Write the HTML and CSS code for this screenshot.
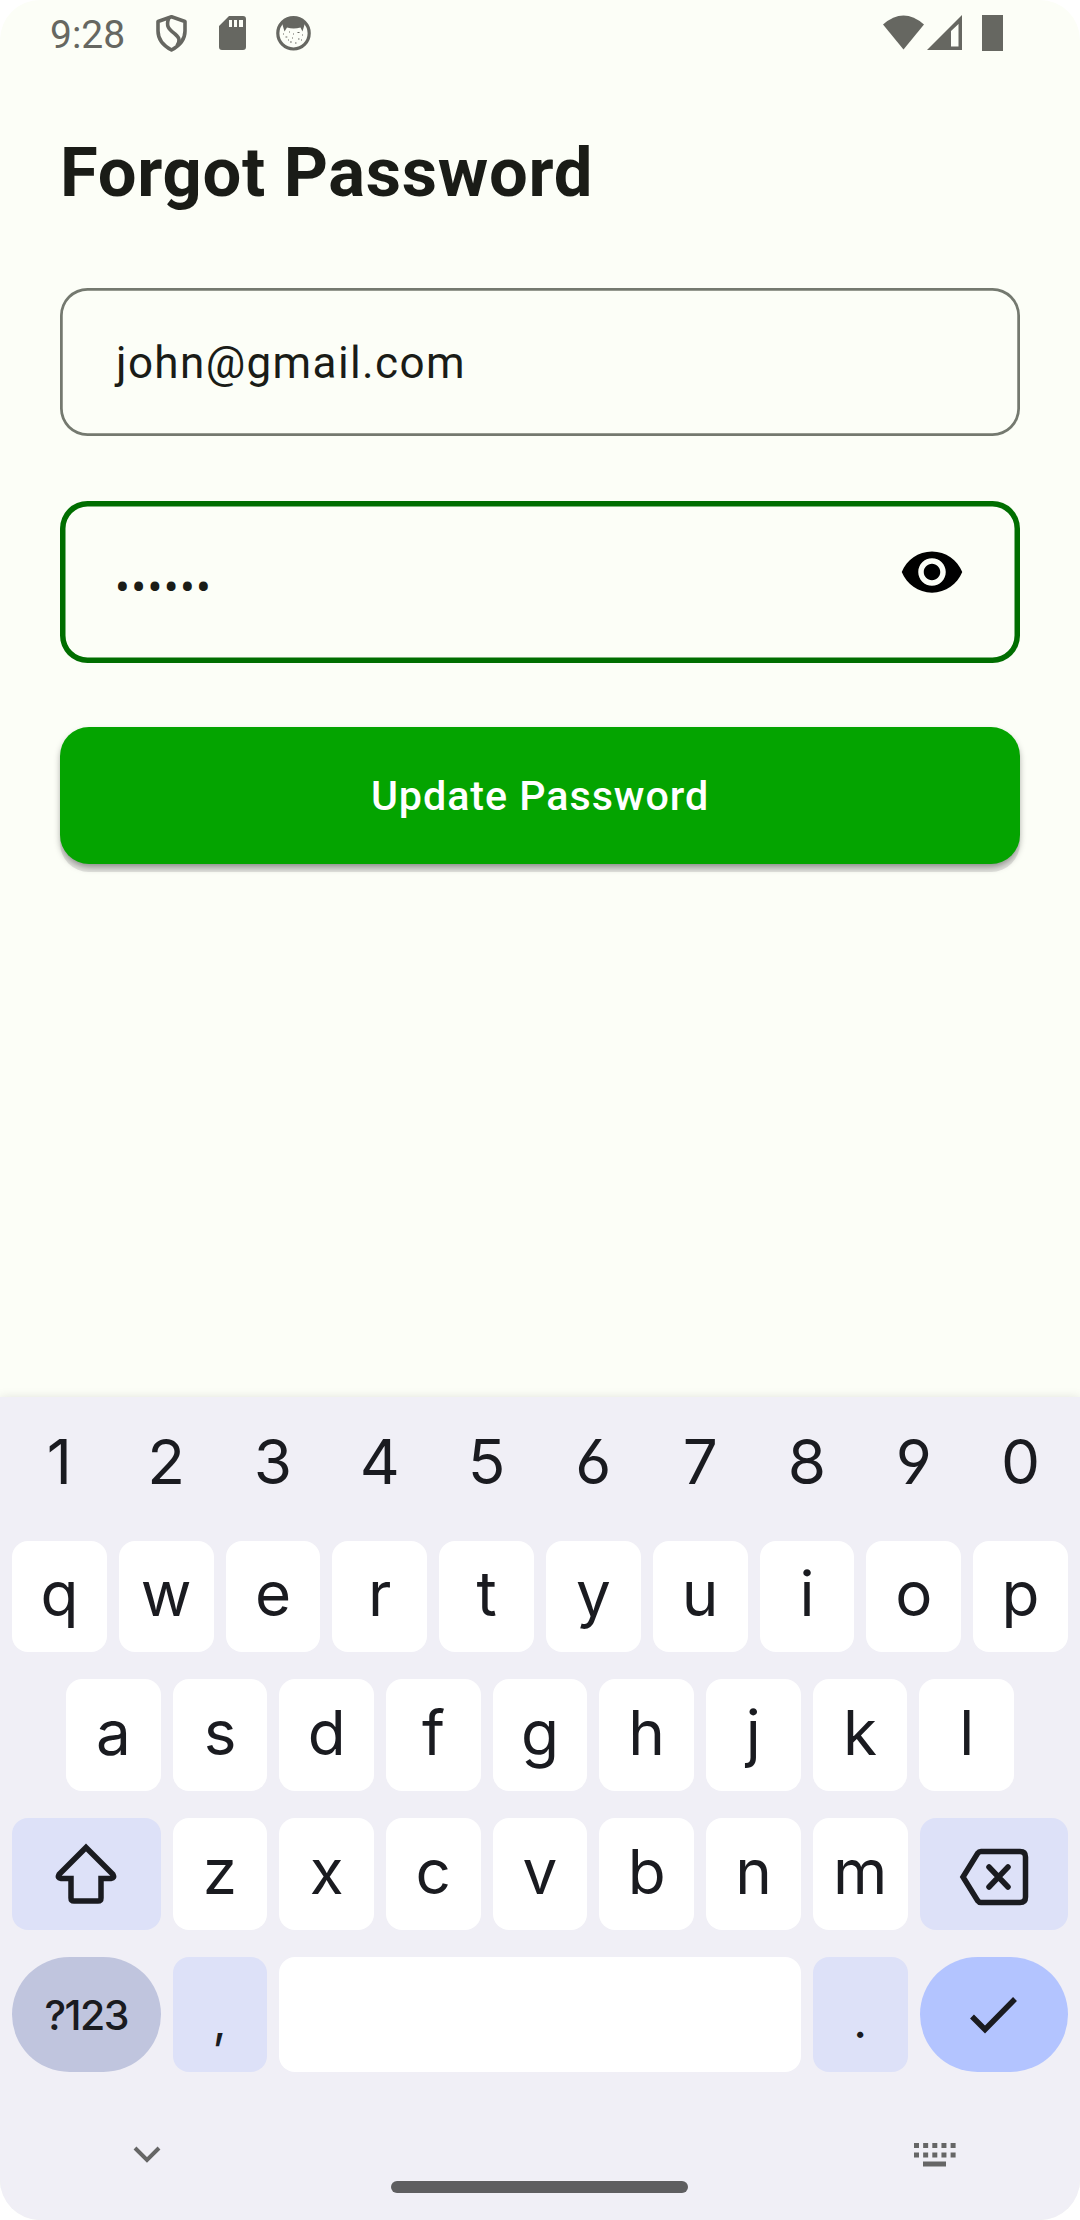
FILE: index.html
```html
<!DOCTYPE html>
<html lang="en">
<head>
<meta charset="utf-8">
<title>Forgot Password</title>
<link rel="stylesheet" href="styles.css">
</head>
<body>
<div class="screen">
  <header class="status">
    <span class="time">9:28</span>
    <svg class="status-left" width="156" height="40" viewBox="0 0 156 40">
      <path d="M15.500 3.800 L29 8.500 V18 C29 27 23 33 15.500 37 C8 33 2 27 2 18 V8.500 Z" fill="none" stroke="currentColor" stroke-width="3.600" stroke-linejoin="round"/>
      <path d="M13 4.500 C9 14 14 17 19 21 C24 25 24 28 21 33" fill="none" stroke="currentColor" stroke-width="3.600"/>
      <path fill-rule="evenodd" d="M73 3 H87 Q90 3 90 6 V34 Q90 37 87 37 H66 Q63 37 63 34 V13 Z M73 7 V14 H76 V7 Z M78 7 V14 H81 V7 Z M83 7 V14 H87 V7 Z" fill="currentColor"/>
      <circle cx="137.500" cy="20.300" r="15.700" fill="none" stroke="currentColor" stroke-width="3.200"/>
      <path d="M126 10 Q137.500 0 149 10 L146.500 18.500 L144.500 14.500 Q137.500 16.500 131 14.500 L128.500 18.500 Z" fill="currentColor"/>
      <path d="M127 21h1M133 19h1M141.500 19.500h2M146 22h1M129.500 24h1.800M136 25h1M142 26h1.500M134 29h1.800M139 30h1.500M132 27h1M145 27h1M137 21h1" stroke="currentColor" stroke-width="1.200"/>
    </svg>
    <svg class="status-right" width="124" height="40" viewBox="0 0 124 40">
      <path d="M0 11.500 Q20.500 -6.500 41 11.500 L20.500 36.500 Z" fill="currentColor"/>
      <path fill-rule="evenodd" d="M44 37 L79 2 V37 Z M68 18 V33.500 H75.500 V11 Z" fill="currentColor"/>
      <path d="M99 2 H120 V38 H99 Z" fill="currentColor"/>
    </svg>
  </header>

  <main class="form">
    <h1 class="title">Forgot Password</h1>
    <div class="field email">john@gmail.com</div>
    <div class="field password">
      <span class="dots">••••••</span>
      <svg class="eye" width="66" height="66" viewBox="0 0 24 24"><path d="M12 4.500C7 4.500 2.730 7.610 1 12c1.730 4.390 6 7.500 11 7.500s9.270-3.110 11-7.500c-1.730-4.390-6-7.500-11-7.500zM12 17c-2.760 0-5-2.240-5-5s2.240-5 5-5 5 2.240 5 5-2.240 5-5 5zm0-8c-1.660 0-3 1.340-3 3s1.340 3 3 3 3-1.340 3-3-1.340-3-3-3z"/></svg>
    </div>
    <div class="button">Update Password</div>
  </main>

  <section class="keyboard">
    <div class="row numbers">
      <span>1</span><span>2</span><span>3</span><span>4</span><span>5</span><span>6</span><span>7</span><span>8</span><span>9</span><span class="zero">0</span>
    </div>
    <div class="row first">
      <span class="key">q</span><span class="key">w</span><span class="key">e</span><span class="key">r</span><span class="key">t</span><span class="key">y</span><span class="key">u</span><span class="key">i</span><span class="key">o</span><span class="key">p</span>
    </div>
    <div class="row second">
      <span class="key">a</span><span class="key">s</span><span class="key">d</span><span class="key">f</span><span class="key">g</span><span class="key">h</span><span class="key">j</span><span class="key">k</span><span class="key">l</span>
    </div>
    <div class="row third">
      <span class="key wide tint"><svg width="62" height="62" viewBox="0 0 62 62"><path d="M31 4.500 L58 31.500 Q60 35 56 35.500 H46 V55 Q46 58 43 58 H19 Q16 58 16 55 V35.500 H6 Q2 35 4 31.500 Z" fill="none" stroke="currentColor" stroke-width="5.500"/></svg></span>
      <span class="key">z</span><span class="key">x</span><span class="key">c</span><span class="key">v</span><span class="key">b</span><span class="key">n</span><span class="key">m</span>
      <span class="key wide tint back"><svg width="70" height="58" viewBox="0 0 70 58"><path d="M4 29 L18.500 5.500 Q20 3.500 22 3.500 H61 Q66.500 3.500 66.500 9 V49 Q66.500 54.500 61 54.500 H22 Q20 54.500 18.500 52.500 Z" fill="none" stroke="currentColor" stroke-width="5.500"/><path d="M30 19 L49 39 M49 19 L30 39" stroke="currentColor" stroke-width="5.500" stroke-linecap="round"/></svg></span>
    </div>
    <div class="row fourth">
      <span class="key wide symbols">?123</span>
      <span class="key tint mark">,</span>
      <span class="key space"></span>
      <span class="key tint mark">.</span>
      <span class="key wide enter"><svg width="50" height="40" viewBox="0 0 50 40"><path d="M3 21.500 L16 34.500 L46 4" fill="none" stroke="currentColor" stroke-width="5.500"/></svg></span>
    </div>
    <footer class="nav">
      <svg class="hide" width="28" height="18" viewBox="0 0 28 18"><path d="M2 2 L14 14 L26 2" fill="none" stroke="currentColor" stroke-width="4"/></svg>
      <span class="home"></span>
      <svg class="switch" width="42" height="24" viewBox="0 0 42 24"><path d="M0 2.500H42M0 12H42" stroke="currentColor" stroke-width="5" stroke-dasharray="5 4.150"/><path d="M9 21H32" stroke="currentColor" stroke-width="5"/></svg>
    </footer>
  </section>
</div>
</body>
</html>
```
FILE: styles.css
```css
* { box-sizing: border-box; }

body {
  margin: 0;
  background: #fff;
  font-family: Roboto, "Liberation Sans", sans-serif;
}

svg { display: block; flex: none; }

.screen {
  display: flex;
  flex-direction: column;
  width: 1080px;
  height: 2220px;
  overflow: hidden;
  border-radius: 40px;
  background: #fcfef7;
  color: #1a1c17;
}

.status {
  display: flex;
  height: 66px;
  padding: 13px 73px 0 50px;
  color: #666761;
}

.time {
  width: 106px;
  font-size: 39px;
  line-height: 44px;
}

.status-right { margin-left: auto; }

.form {
  display: flex;
  flex: 1;
  flex-direction: column;
  padding: 67px 60px 0;
}

.title {
  height: 155px;
  margin: 0;
  font-size: 68.75px;
  font-weight: 700;
  letter-spacing: .7px;
  line-height: 80px;
}

.field {
  display: flex;
  align-items: center;
  height: 148px;
  padding: 2px 55px 0 56px;
  border-radius: 27.5px;
  box-shadow: inset 0 0 0 2.75px #74796f;
  font-size: 44px;
  letter-spacing: 1.375px;
}

.password {
  height: 162px;
  margin: 64.500px 0;
  padding-top: 0;
  box-shadow: inset 0 0 0 5.500px #006e00;
}

.dots { margin: 13px 0 0 -1px; }

.eye {
  margin: 0 0 19px auto;
  fill: #000;
}

.button {
  display: flex;
  align-items: center;
  justify-content: center;
  height: 137px;
  border-radius: 29px;
  background: #04a400;
  box-shadow: 0 4px 7px -1px rgba(0, 0, 0, .4), 0 8px 0 #e3e4df;
  color: #fff;
  font-size: 41.25px;
  font-weight: 500;
  letter-spacing: .95px;
}

.keyboard {
  display: flex;
  flex-direction: column;
  height: 823px;
  background: #f0eff6;
  box-shadow: 0 0 10px rgba(0, 0, 0, .1);
  color: #1a1b20;
  font-family: Inter, "Open Sans", sans-serif;
  font-size: 62px;
  font-feature-settings: "cv03", "cv04";
}

.row {
  display: flex;
  gap: 12px;
  height: 112px;
  margin-bottom: 27px;
  padding: 0 12px;
}

.numbers {
  height: 129px;
  margin-bottom: 15px;
}

.numbers span,
.key {
  display: flex;
  flex: 1 1 0;
  align-items: center;
  justify-content: center;
}

.key {
  padding-bottom: 6px;
  border-radius: 16px;
  background: #fff;
}

.first { height: 111px; }
.second { padding: 0 66px; }

.fourth {
  height: 115px;
  margin-bottom: 0;
}

.wide {
  flex: 0 0 148.500px;
  padding-bottom: 0;
}

.back { padding-top: 5px; }
.tint { background: #dde1f8; }

.symbols {
  border-radius: 57.5px;
  background: #c0c5de;
  font-size: 41px;
  font-weight: 500;
  letter-spacing: -1.5px;
}

.mark {
  flex: 0 0 94.5px;
  padding: 12px 0 0;
  font-size: 48px;
}

.enter {
  border-radius: 57.5px;
  background: #b3c4ff;
}

.nav {
  display: flex;
  flex: 1;
  justify-content: space-between;
  padding: 71px 124px 0 133px;
  color: #666;
}

.hide { margin-top: 3px; }

.home {
  width: 297px;
  height: 12px;
  margin: 38px 0 0 4px;
  border-radius: 6px;
  background: #5e5e60;
}
```
